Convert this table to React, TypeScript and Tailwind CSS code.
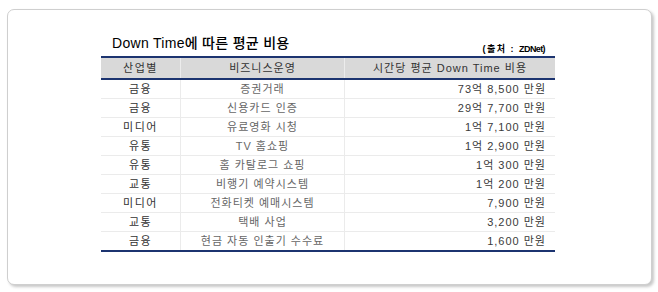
import React from "react";

const rows: [string, string, string][] = [
  ["금융", "증권거래", "73억 8,500 만원"],
  ["금융", "신용카드 인증", "29억 7,700 만원"],
  ["미디어", "유료영화 시청", "1억 7,100 만원"],
  ["유통", "TV 홈쇼핑", "1억 2,900 만원"],
  ["유통", "홈 카탈로그 쇼핑", "1억 300 만원"],
  ["교통", "비행기 예약시스템", "1억 200 만원"],
  ["미디어", "전화티켓 예매시스템", "7,900 만원"],
  ["교통", "택배 사업", "3,200 만원"],
  ["금융", "현금 자동 인출기 수수료", "1,600 만원"],
];

const font = { fontFamily: '"Liberation Sans", "Noto Sans CJK KR", sans-serif' };

export default function App() {
  return (
    <div className="w-[658px] h-[292px] bg-white pt-[9px] pl-[7px]" style={font}>
      <div className="w-[645px] h-[276px] rounded-[7px] border border-[#cfcfcf] bg-white shadow-[2px_2px_3px_rgba(0,0,0,0.22)] pt-[25px] pl-[93px]">
        <div className="w-[454px]">
          <div className="flex items-end justify-between h-[16px] mb-[5px]">
            <div className="pl-[11px] text-[14px] leading-[16px] font-medium text-black tracking-[0.3px]">
              Down Time에 따른 평균 비용
            </div>
            <div className="pr-[10px] text-[9px] leading-[10px] font-bold text-black mb-[-3px] whitespace-pre">
              <span className="tracking-[1.5px]">(출처 : </span>
              <span className="tracking-[-0.6px]">ZDNet)</span>
            </div>
          </div>
          <div className="border-t-2 border-b-2 border-[#1c3470] bg-[#d9d9d9] grid grid-cols-[80px_164px_210px] h-[24px] text-[11px] text-[#333] tracking-[1px]">
            <div className="flex items-center justify-center border-r border-[#ececec] tracking-[1.5px]">산업별</div>
            <div className="flex items-center justify-center border-r border-[#ececec]">비즈니스운영</div>
            <div className="flex items-center justify-center">시간당 평균 Down Time 비용</div>
          </div>
          <div className="border-b-2 border-[#1c3470]">
            {rows.map((r, i) => (
              <div
                key={i}
                className={
                  "grid grid-cols-[80px_164px_210px] text-[11px] tracking-[1px] " +
                  (i < rows.length - 1 ? "h-[19px] border-b border-[#ebebeb]" : "h-[18px]")
                }
              >
                <div className="flex items-center justify-center border-r border-[#ebebeb] text-[#333] tracking-[1.5px]">{r[0]}</div>
                <div className="flex items-center justify-center border-r border-[#ebebeb] text-[#666]">{r[1]}</div>
                <div className="flex items-center justify-end pr-[9px] text-[#3a3a3a] tracking-[1px]">{r[2]}</div>
              </div>
            ))}
          </div>
        </div>
      </div>
    </div>
  );
}
